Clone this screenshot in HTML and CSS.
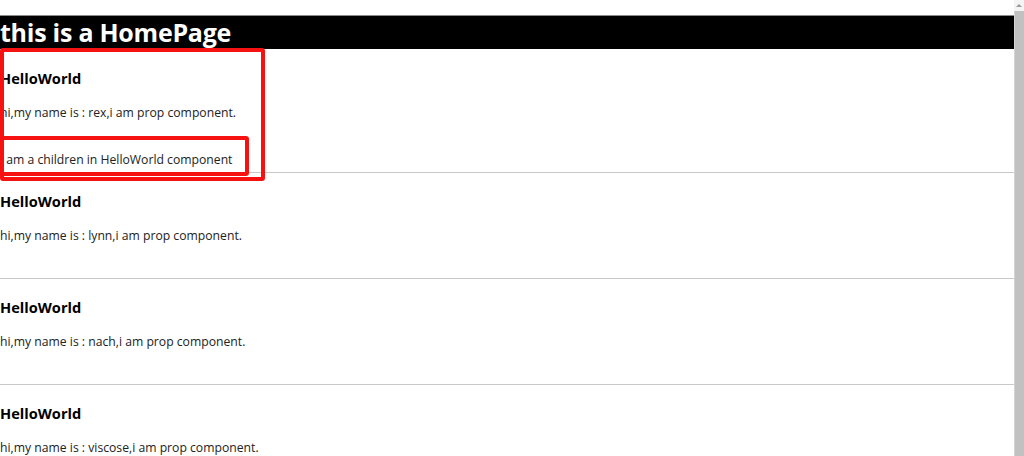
FILE: index.html
```html
<!DOCTYPE html>
<html>
<head>
<meta charset="utf-8">
<title>HomePage</title>
<link rel="stylesheet" href="styles.css">
</head>
<body>
<div class="window">
  <div class="page">
    <div class="topgap"></div>
    <h1 class="title">this is a HomePage</h1>
    <div class="list">
      <section class="hello hello-first">
        <h3 class="hello-title">HelloWorld</h3>
        <p class="hello-text">hi,my name is : rex,i am prop component.</p>
        <p class="hello-child">i am a children in HelloWorld component</p>
        <div class="mark mark-outer"></div>
        <div class="mark mark-inner"></div>
      </section>
      <hr class="sep">
      <section class="hello">
        <h3 class="hello-title">HelloWorld</h3>
        <p class="hello-text">hi,my name is : lynn,i am prop component.</p>
      </section>
      <hr class="sep">
      <section class="hello">
        <h3 class="hello-title">HelloWorld</h3>
        <p class="hello-text">hi,my name is : nach,i am prop component.</p>
      </section>
      <hr class="sep">
      <section class="hello">
        <h3 class="hello-title">HelloWorld</h3>
        <p class="hello-text">hi,my name is : viscose,i am prop component.</p>
      </section>
      <hr class="sep">
    </div>
  </div>
  <div class="scrollbar">
    <div class="scroll-arrow"></div>
    <div class="scroll-thumb"></div>
  </div>
</div>
</body>
</html>
```

FILE: styles.css
```css
html, body {
  margin: 0;
  padding: 0;
  height: 100%;
  overflow: hidden;
  background: #fff;
}
body {
  font-family: "Open Sans", "Noto Sans", sans-serif;
  color: #222;
}
.window {
  display: flex;
  height: 456px;
}
.page {
  flex: 1;
  min-width: 0;
  overflow: hidden;
}
.topgap {
  height: 15px;
  border-bottom: 1px solid #8a8a8a;
}
.title {
  margin: 0;
  background: #000;
  color: #fff;
  font-size: 25px;
  line-height: 33px;
  font-weight: 700;
  letter-spacing: -0.25px;
}
.hello {
  position: relative;
  padding: 20px 0 34px;
}
.hello-first {
  padding: 21px 0 4px;
}
.hello-title {
  margin: 0 0 18px;
  font-size: 14.6px;
  line-height: 17px;
  font-weight: 700;
  color: #000;
}
.hello-text,
.hello-child {
  margin: 0;
  font-size: 12.2px;
  line-height: 16px;
}
.hello-child {
  margin-top: 31px;
}
.sep {
  margin: 0;
  border: 0;
  height: 1px;
  background: #c8c8c8;
}
.mark {
  position: absolute;
  border: 4px solid #f71212;
  border-radius: 3px;
  box-sizing: border-box;
}
.mark-outer {
  left: 0;
  top: -1px;
  width: 265px;
  height: 133px;
}
.mark-inner {
  left: 0;
  top: 87px;
  width: 249px;
  height: 40px;
}
.scrollbar {
  width: 10px;
  display: flex;
  flex-direction: column;
  background: #f4f4f4;
}
.scroll-arrow {
  height: 11px;
  display: flex;
  justify-content: center;
  align-items: center;
}
.scroll-arrow::before {
  content: "";
  border-left: 3px solid transparent;
  border-right: 3px solid transparent;
  border-bottom: 3px solid #9a9a9a;
}
.scroll-thumb {
  flex: 1;
  background: #c1c1c1;
  border-left: 1px solid #d4d4d4;
}
```
